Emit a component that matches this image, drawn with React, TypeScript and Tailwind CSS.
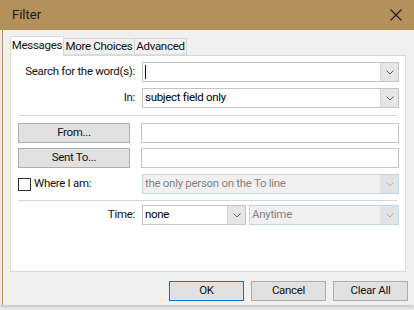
import React from "react";

const font = { fontFamily: 'Roboto, "Noto Sans", sans-serif' };

function Chevron({ disabled }: { disabled?: boolean }) {
    return (
        <svg width="8" height="5" viewBox="0 0 8 5">
            <path d="M0.5 0.5 L4 4 L7.5 0.5" fill="none" stroke={disabled ? "#b4b4b4" : "#606060"} strokeWidth="1" />
        </svg>
    );
}

function Combo({ value, disabled, caret, className }: { value?: string; disabled?: boolean; caret?: boolean; className?: string }) {
    return (
        <div
            className={
                "h-[20px] flex items-stretch border whitespace-nowrap " +
                (disabled ? "bg-[#f0f0f0] border-[#c6d3df] text-[#838383] " : "bg-white border-[#c4c4c4] text-black ") +
                (className || "")
            }
        >
            <div className="flex-1 flex items-center pl-[2px] leading-none">
                {caret && <div className="w-px h-[14px] bg-black" />}
                {value}
            </div>
            <div className={"w-[18px] flex items-center justify-center border-l " + (disabled ? "bg-[#e3e3e3] border-[#e3e3e3]" : "bg-[#e6e6e6] border-[#d4d4d4]")}>
                <Chevron disabled={disabled} />
            </div>
        </div>
    );
}

function Btn({ label, primary, className }: { label: string; primary?: boolean; className?: string }) {
    return (
        <div
            className={
                "h-[20px] shrink-0 flex items-center justify-center bg-[#e1e1e1] border leading-none whitespace-nowrap " +
                (primary ? "border-[#0078d7] " : "border-[#adadad] ") +
                (className || "")
            }
        >
            {label}
        </div>
    );
}

export default function App() {
    return (
        <div className="w-[414px] h-[310px] bg-[#e9e9e9] overflow-hidden text-[11.5px] tracking-[-0.3px] text-[#111111] select-none" style={font}>
            {/* title bar */}
            <div className="h-[30px] bg-[#b3915a] flex items-center justify-between pl-[12px] pr-[12px]">
                <span className="text-[13px] tracking-normal text-[#1a1a1a]">Filter</span>
                <svg width="12" height="12" viewBox="0 0 12 12">
                    <path d="M0.5 0.5 L11.5 11.5 M11.5 0.5 L0.5 11.5" stroke="#1a1a1a" strokeWidth="1.1" />
                </svg>
            </div>
            <div className="flex h-[275px] pl-[2px] shadow-[0_2px_3px_rgba(0,0,0,0.15)]">
                <div className="w-px bg-[#b3915a]" />
                <div className="flex-1 bg-[#f0f0f0] flex flex-col pl-[7px] pr-[6px] pt-[6px]">
                    {/* tabs */}
                    <div className="flex items-end h-[19px] pr-[2px] whitespace-nowrap">
                        <div className="relative z-10 w-[54px] h-[20px] -mb-px bg-white border border-b-0 border-[#d9d9d9] flex items-center justify-center pb-[1px]">
                            Messages
                        </div>
                        <div className="w-[71px] h-[17px] bg-[#f0f0f0] border border-l-0 border-[#d9d9d9] flex items-center justify-center">
                            More Choices
                        </div>
                        <div className="w-[52px] h-[17px] bg-[#f0f0f0] border border-l-0 border-[#d9d9d9] flex items-center justify-center">
                            Advanced
                        </div>
                    </div>
                    {/* panel */}
                    <div className="h-[217px] mr-[2px] bg-white border border-[#d9d9d9] flex flex-col pl-[7px] pr-[6px]">
                        <div className="flex items-center mt-[6px]">
                            <div className="w-[117px] shrink-0 text-right whitespace-nowrap">Search for the word(s):</div>
                            <Combo caret className="ml-[7px] flex-1" />
                        </div>
                        <div className="flex items-center mt-[6px]">
                            <div className="w-[117px] shrink-0 text-right">In:</div>
                            <Combo value="subject field only" className="ml-[7px] flex-1" />
                        </div>
                        <div className="h-px bg-[#d5d5d5] mt-[7px] mr-[2px]" />
                        <div className="flex items-center mt-[7px]">
                            <Btn label="From..." className="w-[112px]" />
                            <div className="ml-[11px] flex-1 h-[20px] border border-[#c4c4c4] bg-white" />
                        </div>
                        <div className="flex items-center mt-[5px]">
                            <Btn label="Sent To..." className="w-[112px]" />
                            <div className="ml-[11px] flex-1 h-[20px] border border-[#c4c4c4] bg-white" />
                        </div>
                        <div className="flex items-center mt-[6px]">
                            <div className="w-[124px] shrink-0 flex items-center whitespace-nowrap">
                                <div className="w-[13px] h-[13px] border border-[#333333] bg-white" />
                                <span className="ml-[3px]">Where I am:</span>
                            </div>
                            <Combo disabled value="the only person on the To line" className="flex-1" />
                        </div>
                        <div className="h-px bg-[#d5d5d5] mt-[6px] mr-[2px]" />
                        <div className="flex items-center mt-[4px]">
                            <div className="w-[117px] shrink-0 text-right">Time:</div>
                            <Combo value="none" className="ml-[7px] w-[104px] shrink-0" />
                            <Combo disabled value="Anytime" className="ml-[3px] flex-1" />
                        </div>
                    </div>
                    {/* footer buttons */}
                    <div className="flex justify-end gap-[7px] mt-[9px]">
                        <Btn label="OK" primary className="w-[75px]" />
                        <Btn label="Cancel" className="w-[75px]" />
                        <Btn label="Clear All" className="w-[75px]" />
                    </div>
                </div>
            </div>
        </div>
    );
}
